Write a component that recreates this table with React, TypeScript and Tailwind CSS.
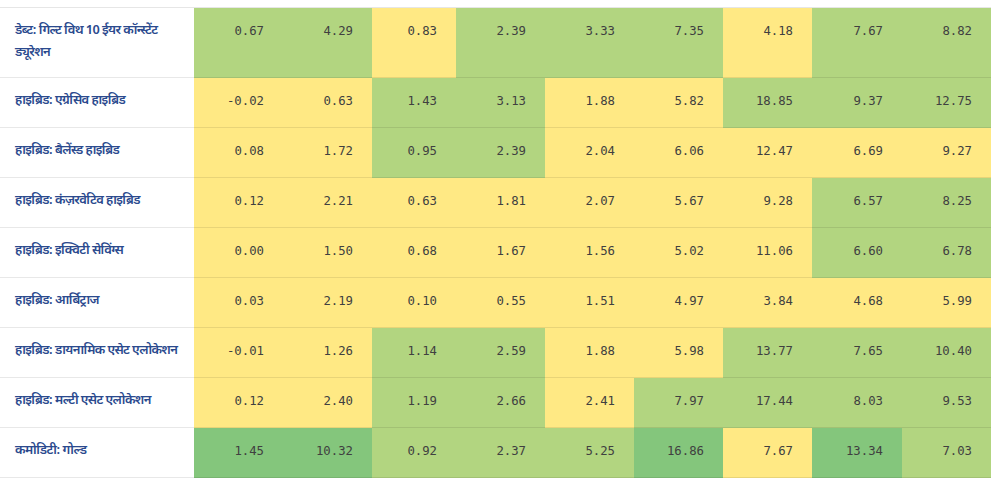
const rows: { name: string[]; vals: number[]; tone: string[] }[] = [
  {
    name: ["डेब्ट: गिल्ट विथ 10 ईयर कॉन्स्टेंट", "ड्यूरेशन"],
    vals: [0.67, 4.29, 0.83, 2.39, 3.33, 7.35, 4.18, 7.67, 8.82],
    tone: ["g", "g", "y", "g", "g", "g", "y", "g", "g"],
  },
  {
    name: ["हाइब्रिड: एग्रेसिव हाइब्रिड"],
    vals: [-0.02, 0.63, 1.43, 3.13, 1.88, 5.82, 18.85, 9.37, 12.75],
    tone: ["y", "y", "g", "g", "y", "y", "g", "g", "g"],
  },
  {
    name: ["हाइब्रिड: बैलेंस्ड हाइब्रिड"],
    vals: [0.08, 1.72, 0.95, 2.39, 2.04, 6.06, 12.47, 6.69, 9.27],
    tone: ["y", "y", "g", "g", "y", "y", "y", "y", "y"],
  },
  {
    name: ["हाइब्रिड: कंज़रवेटिव हाइब्रिड"],
    vals: [0.12, 2.21, 0.63, 1.81, 2.07, 5.67, 9.28, 6.57, 8.25],
    tone: ["y", "y", "y", "y", "y", "y", "y", "g", "g"],
  },
  {
    name: ["हाइब्रिड: इक्विटी सेविंग्स"],
    vals: [0.0, 1.5, 0.68, 1.67, 1.56, 5.02, 11.06, 6.6, 6.78],
    tone: ["y", "y", "y", "y", "y", "y", "y", "g", "g"],
  },
  {
    name: ["हाइब्रिड: आर्बिट्राज"],
    vals: [0.03, 2.19, 0.1, 0.55, 1.51, 4.97, 3.84, 4.68, 5.99],
    tone: ["y", "y", "y", "y", "y", "y", "y", "y", "y"],
  },
  {
    name: ["हाइब्रिड: डायनामिक एसेट एलोकेशन"],
    vals: [-0.01, 1.26, 1.14, 2.59, 1.88, 5.98, 13.77, 7.65, 10.4],
    tone: ["y", "y", "g", "g", "y", "y", "g", "g", "g"],
  },
  {
    name: ["हाइब्रिड: मल्टी एसेट एलोकेशन"],
    vals: [0.12, 2.4, 1.19, 2.66, 2.41, 7.97, 17.44, 8.03, 9.53],
    tone: ["y", "y", "g", "g", "y", "g", "g", "g", "g"],
  },
  {
    name: ["कमोडिटी: गोल्ड"],
    vals: [1.45, 10.32, 0.92, 2.37, 5.25, 16.86, 7.67, 13.34, 7.03],
    tone: ["d", "d", "g", "g", "g", "d", "y", "d", "g"],
  },
]

const widths = [89, 89, 84, 89, 89, 89, 89, 90, 89]

function toneClass(t: string) {
  if (t === "y") return "bg-[#ffe984]"
  if (t === "d") return "bg-[#84c67c]"
  return "bg-[#b2d580]"
}

export default function App() {
  return (
    <div className="w-[1000px] h-[478px] bg-white overflow-hidden pt-[7px]">
      <table className="border-collapse table-fixed w-[991px] border-t border-[#e6e6e6]">
        <colgroup>
          <col style={{ width: 194 }} />
          {widths.map((w, i) => (
            <col key={i} style={{ width: w }} />
          ))}
        </colgroup>
        <tbody>
          {rows.map((r, i) => (
            <tr
              key={i}
              className={`border-b border-[rgba(0,0,0,0.09)] ${i === 0 ? "h-[70px]" : "h-[50px]"}`}
            >
              <td className="align-top pl-[15px] pt-[12px] pr-0 whitespace-nowrap font-['Noto_Sans_Devanagari','Noto_Sans',sans-serif] text-[13px] leading-[22px] font-semibold tracking-[-0.6px] text-[#2b4a8e]">
                {r.name.map((n, k) => (
                  <div key={k}>{n}</div>
                ))}
              </td>
              {r.vals.map((v, j) => (
                <td
                  key={j}
                  className={`${toneClass(r.tone[j])} align-top text-right pr-[19px] pt-[12px] font-['DejaVu_Sans_Mono',monospace] text-[12.3px] leading-[22px] text-[#404040]`}
                >
                  {v.toFixed(2)}
                </td>
              ))}
            </tr>
          ))}
        </tbody>
      </table>
    </div>
  )
}
